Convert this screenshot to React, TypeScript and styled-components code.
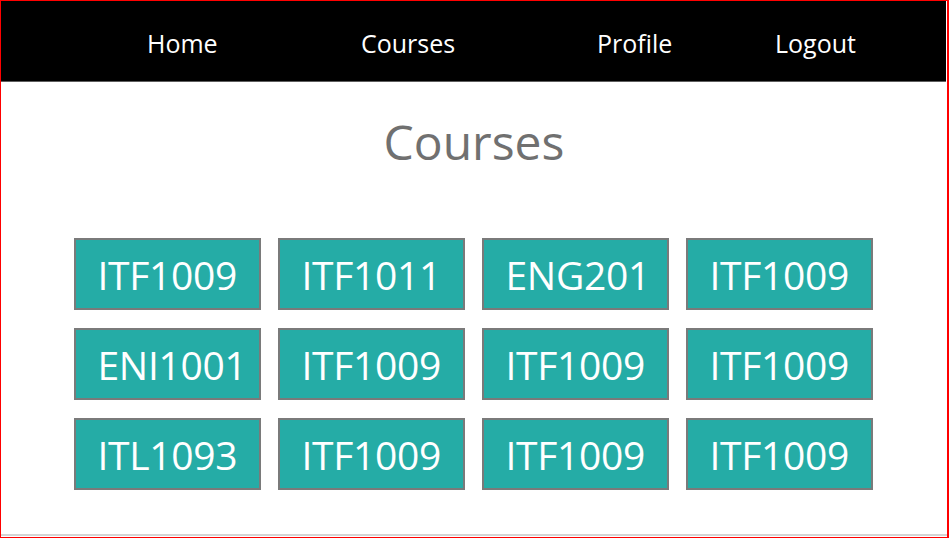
import React from "react"
import styled, { createGlobalStyle } from "styled-components"

const GlobalStyle = createGlobalStyle`
  html, body {
    margin: 0;
    padding: 0;
    background: #ffffff;
  }
  body {
    font-family: "Open Sans", "Noto Sans", "Liberation Sans", sans-serif;
  }
  * {
    box-sizing: border-box;
  }
`

const Page = styled("div")`
  display: flex;
  flex-direction: column;
  width: 949px;
  height: 538px;
  border: 1px solid #ff0000;
  border-right-width: 2px;
  background: #ffffff;
`

const NavBar = styled("nav")`
  display: flex;
  align-items: center;
  height: 81px;
  padding-left: 146px;
  background: #000000;
  border-bottom: 1px solid #5e5e5e;
  margin-right: 1px;
`

const NavLink = styled("a")<{ $w?: number }>`
  display: block;
  width: ${(p) => (p.$w ? `${p.$w}px` : "auto")};
  color: #ffffff;
  font-size: 25px;
  font-weight: 400;
  text-decoration: none;
  cursor: pointer;
  padding-top: 4px;
`

const Main = styled("main")`
  flex: 1;
  display: flex;
  flex-direction: column;
  align-items: center;
`

const Title = styled("h1")`
  margin: 31px 0 0;
  font-size: 48px;
  line-height: 58px;
  font-weight: 400;
  color: #707070;
`

const Grid = styled("div")`
  display: grid;
  grid-template-columns: repeat(4, 187px);
  grid-auto-rows: 72px;
  column-gap: 17px;
  row-gap: 18px;
  margin-top: 67px;
  margin-right: 2px;
`

const CourseCard = styled("div")`
  display: flex;
  align-items: center;
  padding: 0 0 0 22px;
  background: #25aca6;
  border: 2px solid #7a7a7a;
  color: #ffffff;
  font-size: 39px;
  font-weight: 400;
  letter-spacing: -0.3px;
  cursor: pointer;
`

const Footer = styled("div")`
  height: 3px;
  border-top: 2px solid #d4d4d4;
`

const links = [
  { label: "Home", w: 214 },
  { label: "Courses", w: 236 },
  { label: "Profile", w: 178 },
  { label: "Logout" },
]

const courses = [
  "ITF1009",
  "ITF1011",
  "ENG201",
  "ITF1009",
  "ENI1001",
  "ITF1009",
  "ITF1009",
  "ITF1009",
  "ITL1093",
  "ITF1009",
  "ITF1009",
  "ITF1009",
]

const App: React.FC = () => {
  return (
    <>
      <GlobalStyle />
      <Page>
        <NavBar>
          {links.map((l) => (
            <NavLink key={l.label} $w={l.w}>
              {l.label}
            </NavLink>
          ))}
        </NavBar>
        <Main>
          <Title>Courses</Title>
          <Grid>
            {courses.map((c, i) => (
              <CourseCard key={i}>{c}</CourseCard>
            ))}
          </Grid>
        </Main>
        <Footer />
      </Page>
    </>
  )
}

export default App
